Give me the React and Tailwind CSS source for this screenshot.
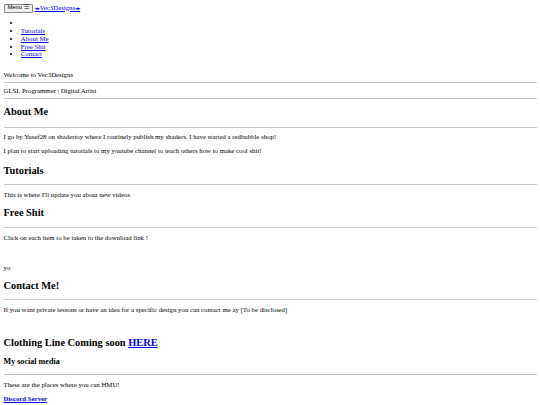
const navLinks = ["Tutorials", "About Me", "Free Shit", "Contact"];

function Rule() {
  return <hr className="my-[3.5px] border-t border-[#c6c6c6]" />;
}

function SectionTitle({ children, className = "my-[8px]" }) {
  return <h2 className={`text-[10.4px] leading-[11.5px] font-bold ${className}`}>{children}</h2>;
}

export default function App() {
  return (
    <div className="bg-white min-h-[405px] p-[3.5px] font-['Liberation_Serif',serif] text-[6.8px] leading-[7.7px] text-black">
      <header>
        <div className="flex items-center gap-[2px]">
          <button className="h-[9px] px-[3px] flex items-center bg-[#efefef] border border-[#8a8a8a] rounded-[1px] font-['Liberation_Sans',sans-serif] text-[5.8px] leading-none">
            Menu ☰
          </button>
          <a href="#" className="text-[#0000ee] underline">
            <span className="font-['DejaVu_Sans',sans-serif] text-[5px]">◂▸</span>Vec3Designs<span className="font-['DejaVu_Sans',sans-serif] text-[5px]">◂▸</span>
          </a>
        </div>
        <ul className="list-disc pl-[17.3px] my-[6.9px]">
          <li>&nbsp;</li>
          {navLinks.map((l) => (
            <li key={l}>
              <a href="#" className="text-[#0000ee] underline">{l}</a>
            </li>
          ))}
        </ul>
      </header>

      <div className="mt-[13px]">Welcome to Vec3Designs</div>
      <Rule />
      <div>GLSL Programmer | Digital Artist</div>
      <Rule />

      <SectionTitle className="mt-[7px] mb-[10px]">About Me</SectionTitle>
      <Rule />
      <p className="mt-[5px] mb-[6.3px]">I go by Yusef28 on shadertoy where I routinely publish my shaders. I have started a redbubble shop!</p>
      <p className="my-[6.3px]">I plan to start uploading tutorials to my youtube channel to teach others how to make cool shit!</p>

      <SectionTitle className="mt-[10px] mb-[7.5px]">Tutorials</SectionTitle>
      <Rule />
      <p className="my-[6.3px]">This is where I'll update you about new videos</p>

      <SectionTitle>Free Shit</SectionTitle>
      <Rule />
      <p className="my-[6.3px]">Click on each item to be taken to the download link !</p>
      <div className="h-[16px]" />
      <div>yo</div>

      <SectionTitle>Contact Me!</SectionTitle>
      <Rule />
      <p className="my-[6.3px]">If you want private lessons or have an idea for a specific design you can contact me ay [To be disclosed]</p>
      <div className="h-[9px]" />

      <SectionTitle>
        Clothing Line Coming soon <a href="#" className="text-[#0000ee] underline">HERE</a>
      </SectionTitle>
      <h3 className="text-[8.1px] leading-[9px] font-bold mt-[7px] mb-[8px]">My social media</h3>
      <Rule />
      <p className="my-[6.3px]">These are the places where you can HMU!</p>
      <a href="#" className="text-[#0000ee] underline font-bold">Discord Server</a>
    </div>
  );
}
